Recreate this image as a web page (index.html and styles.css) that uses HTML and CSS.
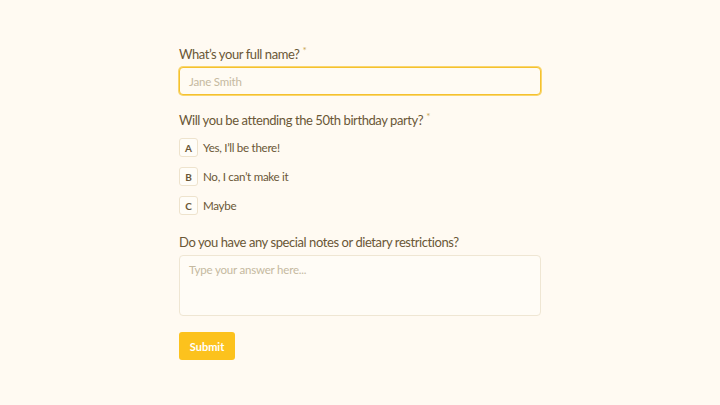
FILE: index.html
```html
<!DOCTYPE html>
<html lang="en">
<head>
<meta charset="utf-8">
<title>RSVP</title>
<link rel="stylesheet" href="styles.css">
</head>
<body>
<form class="form">
  <div class="field">
    <label class="label">What’s your full name? <span class="req">*</span></label>
    <div class="input focused"><span class="ph">Jane Smith</span></div>
  </div>
  <div class="field">
    <label class="label">Will you be attending the 50th birthday party? <span class="req">*</span></label>
    <div class="options">
      <div class="option"><span class="key">A</span><span class="opt-text">Yes, I’ll be there!</span></div>
      <div class="option"><span class="key">B</span><span class="opt-text">No, I can’t make it</span></div>
      <div class="option"><span class="key">C</span><span class="opt-text">Maybe</span></div>
    </div>
  </div>
  <div class="field">
    <label class="label">Do you have any special notes or dietary restrictions?</label>
    <div class="textarea"><span class="ph">Type your answer here...</span></div>
  </div>
  <div class="actions">
    <button type="button" class="submit">Submit</button>
  </div>
</form>
</body>
</html>
```
FILE: styles.css
```css
* { box-sizing: border-box; }
html, body {
  margin: 0;
  background: #fffaf2;
}
body {
  font-family: "Lato", "Open Sans", sans-serif;
  color: #6a5736;
  height: 405px;
}
.form {
  width: 362px;
  margin: 0 0 0 179px;
  padding-top: 44px;
  display: flex;
  flex-direction: column;
}
.field {
  display: flex;
  flex-direction: column;
}
.label {
  font-size: 13px;
  letter-spacing: -0.42px;
  line-height: 20px;
  height: 20px;
  color: #6a5736;
}
.req {
  color: #c9a852;
  font-size: 10px;
  line-height: 0;
  vertical-align: 5px;
}
.input {
  margin-top: 3px;
  height: 28px;
  border-radius: 4px;
  background: #fffbf3;
  border: 1px solid #f5c12e;
  box-shadow: 0 0 0 1px #f9d66e;
  display: flex;
  align-items: center;
  padding-left: 9px;
  margin-bottom: 15px;
}
.ph {
  font-size: 11.5px;
  letter-spacing: -0.2px;
  color: #c5b99f;
}
.options {
  margin-top: 8px;
  display: flex;
  flex-direction: column;
  gap: 10px;
  margin-bottom: 17px;
}
.option {
  display: flex;
  align-items: center;
  gap: 5px;
  height: 19px;
}
.key {
  width: 19px;
  height: 19px;
  border: 1px solid #eee3cd;
  border-radius: 3px;
  background: #fffdf8;
  display: flex;
  align-items: center;
  justify-content: center;
  font-size: 10px;
  font-weight: 700;
  color: #6a5736;
}
.opt-text {
  font-size: 11.6px;
  letter-spacing: -0.3px;
  color: #6a5736;
}
.textarea {
  margin-top: 3px;
  height: 61px;
  border: 1px solid #efe6d3;
  border-radius: 4px;
  background: #fffcf6;
  padding: 5px 9px;
  line-height: 14px;
}
.actions {
  margin-top: 16px;
}
.submit {
  width: 56px;
  height: 28px;
  border: none;
  border-radius: 3px;
  background: #fcc21d;
  color: #ffffff;
  font-family: inherit;
  font-size: 11px;
  font-weight: 700;
  padding: 0;
  cursor: pointer;
}
```
